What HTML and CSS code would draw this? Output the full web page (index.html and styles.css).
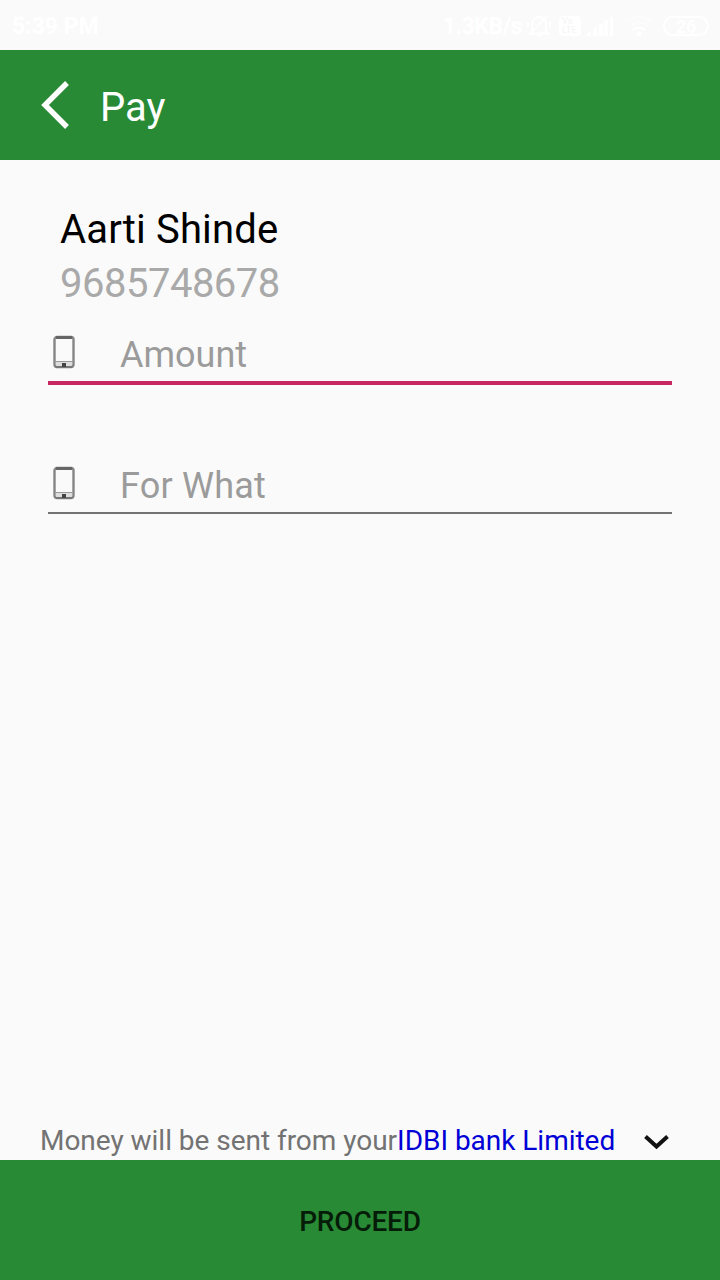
FILE: index.html
```html
<!DOCTYPE html>
<html lang="en">
<head>
<meta charset="utf-8">
<title>Pay</title>
<link rel="stylesheet" href="styles.css">
</head>
<body>
<div class="screen">
  <div class="status">
    <span class="time">5:39 PM</span>
    <span class="speed">1.3KB/s</span>
    <svg class="bell" width="24" height="24" viewBox="0 0 24 24" fill="none" stroke="#fff" stroke-width="1.8"><path d="M5 18V10a7 7 0 0 1 14 0v8l2 1.500H3zM2 21 20 2M1 8v5M23 8v5"/><path d="M9 21h6l-3 2z" fill="#fff" stroke="none"/></svg>
    <div class="volte"><span>Vo</span><span>LTE</span></div>
    <svg class="signal" width="28" height="20" viewBox="0 0 28 20" fill="#fff"><path d="M0 18l5-3v5H0zM7 13l4-2v9H7zM13 9l4-2v13h-4zM18 5l4-2v17h-4zM24 2l3-2v20h-3z"/></svg>
    <svg class="wifi" width="28" height="20" viewBox="0 0 28 20" fill="none" stroke="#fff" stroke-width="2.5"><path d="M1 6q13-10 26 0M5 10q9-7 18 0" opacity=".4"/><path d="M8 14q6-5 12 0"/><circle cx="14" cy="18" r="1.200"/></svg>
    <div class="battery">26</div>
  </div>
  <header class="bar">
    <svg class="back" width="29" height="48" viewBox="0 0 29 48" fill="none" stroke="#fff" stroke-width="5.400"><path d="M26 2 4 24 26 46"/></svg>
    <h1 class="title">Pay</h1>
  </header>
  <main class="content">
    <div class="payee">Aarti Shinde</div>
    <div class="phone">9685748678</div>
    <div class="field field-active">
      <svg class="device" width="22" height="34" viewBox="0 0 22 34"><rect x="1.500" y="2" width="19" height="30" rx="2.500" fill="none" stroke="#858585" stroke-width="2.400"/><path d="M3 2.500h16" stroke="#666" stroke-width="3"/><path d="M3 28.500h16" stroke="#ddd" stroke-width="4"/><path d="M2 26.500h18" stroke="#999"/><path d="M3 32h16" stroke="#777" stroke-width="2"/><rect x="9" y="28" width="4" height="4" fill="#444"/></svg>
      <span class="hint">Amount</span>
    </div>
    <div class="field">
      <svg class="device" width="22" height="34" viewBox="0 0 22 34"><rect x="1.500" y="2" width="19" height="30" rx="2.500" fill="none" stroke="#858585" stroke-width="2.400"/><path d="M3 2.500h16" stroke="#666" stroke-width="3"/><path d="M3 28.500h16" stroke="#ddd" stroke-width="4"/><path d="M2 26.500h18" stroke="#999"/><path d="M3 32h16" stroke="#777" stroke-width="2"/><rect x="9" y="28" width="4" height="4" fill="#444"/></svg>
      <span class="hint hint-purpose">For What</span>
    </div>
  </main>
  <div class="source">
    <span class="note">Money will be sent from your</span><span class="bank">IDBI bank Limited</span>
    <svg class="chevron" width="25" height="16" viewBox="0 0 25 16" fill="none" stroke="#111" stroke-width="4"><path d="M1.500 2.500 12.500 12.500 23.500 2.500"/></svg>
  </div>
  <button class="proceed">PROCEED</button>
</div>
</body>
</html>
```
FILE: styles.css
```css
* { box-sizing: border-box; }
body { margin: 0; }
.screen {
  width: 720px;
  height: 1280px;
  display: flex;
  flex-direction: column;
  background: #fafafa;
  font-family: Roboto, sans-serif;
  overflow: hidden;
}
.status {
  height: 50px;
  padding: 1px 11px 0 12px;
  display: flex;
  align-items: center;
  color: #fff;
  font-size: 23px;
  font-weight: 700;
  white-space: nowrap;
}
.speed { margin-left: auto; letter-spacing: -0.5px; }
.time, .speed { padding-top: 1px; }
.bell { margin-left: 5px; }
.volte {
  width: 22px;
  height: 20px;
  margin-left: 8px;
  border-radius: 4px;
  background: #fff;
  color: #f7f7f7;
  display: flex;
  flex-direction: column;
  font-size: 9px;
  line-height: 9px;
  padding: 1px 3px;
}
.signal { margin-left: 5px; }
.wifi { margin-left: 11px; }
.battery {
  width: 46px;
  height: 20px;
  margin-left: 10px;
  border: 2px solid #fff;
  border-radius: 10px;
  font-size: 18px;
  line-height: 17px;
  text-align: center;
}
.bar {
  height: 110px;
  padding-left: 41px;
  display: flex;
  align-items: center;
  background: #288a35;
}
.title {
  margin: 6px 0 0 30px;
  color: #fff;
  font-size: 40px;
  font-weight: 400;
  line-height: 48px;
}
.content { flex: 1; padding: 43px 48px 0; }
.payee, .phone {
  padding-left: 12px;
  font-size: 40px;
  line-height: 54px;
}
.payee { color: #000; letter-spacing: 0.15px; }
.phone { color: #a9a9a9; letter-spacing: -0.5px; }
.field {
  height: 54px;
  margin-top: 75px;
  padding-left: 5px;
  display: flex;
  align-items: flex-start;
  border-bottom: 2px solid #737373;
}
.field-active {
  height: 55px;
  margin-top: 19px;
  border-bottom: 4px solid #c82661;
}
.device { margin-top: 5px; }
.hint {
  margin: 4px 0 0 45px;
  color: #9b9b9b;
  font-size: 36px;
  line-height: 42px;
}
.hint-purpose { letter-spacing: 0.2px; }
.field:not(.field-active) .device { margin-top: 6px; }
.field:not(.field-active) .hint { margin-top: 5px; }
.source {
  height: 36px;
  padding: 0 51px 0 40px;
  display: flex;
  align-items: flex-start;
  font-size: 28px;
  line-height: 33px;
  letter-spacing: -0.03px;
  white-space: nowrap;
}
.note { color: #737373; }
.bank { color: #0000d6; }
.chevron { margin: 10px 0 0 auto; }
.proceed {
  height: 120px;
  border: 0;
  padding: 2px 0 0;
  background: #288a35;
  color: #051c08;
  font-family: Roboto, sans-serif;
  font-size: 28px;
  font-weight: 500;
  letter-spacing: -0.2px;
}
```
